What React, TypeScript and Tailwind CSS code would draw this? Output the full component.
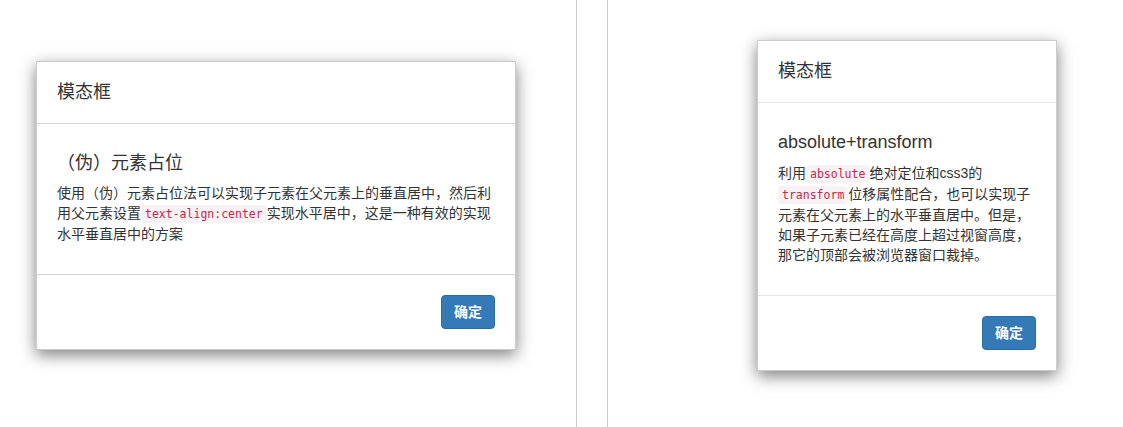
import React from "react";

const font = "font-['Liberation_Sans','Noto_Sans_CJK_SC',sans-serif]";

function Code({ children }: { children: React.ReactNode }) {
  return (
    <code className="rounded-[4px] bg-[#f9f2f4] px-[4px] py-[2px] font-['DejaVu_Sans_Mono',monospace] text-[11.5px] text-[#c7254e]">
      {children}
    </code>
  );
}

function Modal({
  width,
  line,
  title,
  children,
}: {
  width: string;
  line: string;
  title: string;
  children: React.ReactNode;
}) {
  return (
    <div
      className={`${width} border border-[rgba(0,0,0,0.2)] bg-white shadow-[0_5px_15px_rgba(0,0,0,0.5)]`}
    >
      <div className={`border-b ${line} p-5`}>
        <h3 className="text-[18px] leading-[21px] text-[#333]">模态框</h3>
      </div>
      <div className="p-5">
        <h4 className="my-[10px] text-[18px] leading-[1.1] text-[#333]">{title}</h4>
        <p className="mb-[10px] text-[14px] leading-[20px] text-[#333]">{children}</p>
      </div>
      <div className={`flex justify-end border-t ${line} p-5`}>
        <button className="h-[34px] rounded-[4px] border border-[#2e6da4] bg-[#337ab7] px-3 text-[14px] font-bold leading-[20px] text-white">
          确定
        </button>
      </div>
    </div>
  );
}

export default function App() {
  return (
    <div className={`flex h-[427px] w-[1123px] bg-white ${font}`}>
      <div className="flex h-full w-[577px] items-center border-r border-[#cccccc] pb-[16px] pl-[36px]">
        <Modal width="w-[480px]" line="border-[#d4d4d4]" title="（伪）元素占位">
          使用（伪）元素占位法可以实现子元素在父元素上的垂直居中，然后利用父元素设置
          <Code>text-align:center</Code>
          实现水平居中，这是一种有效的实现水平垂直居中的方案
        </Modal>
      </div>
      <div className="ml-[30px] flex h-full flex-1 items-center border-l border-[#cccccc] pb-[16px] pl-[149px]">
        <Modal width="w-[300px]" line="border-[#e5e5e5]" title="absolute+transform">
          利用<Code>absolute</Code>绝对定位和css3的<Code>transform</Code>
          位移属性配合，也可以实现子元素在父元素上的水平垂直居中。但是，如果子元素已经在高度上超过视窗高度，那它的顶部会被浏览器窗口裁掉。
        </Modal>
      </div>
    </div>
  );
}
